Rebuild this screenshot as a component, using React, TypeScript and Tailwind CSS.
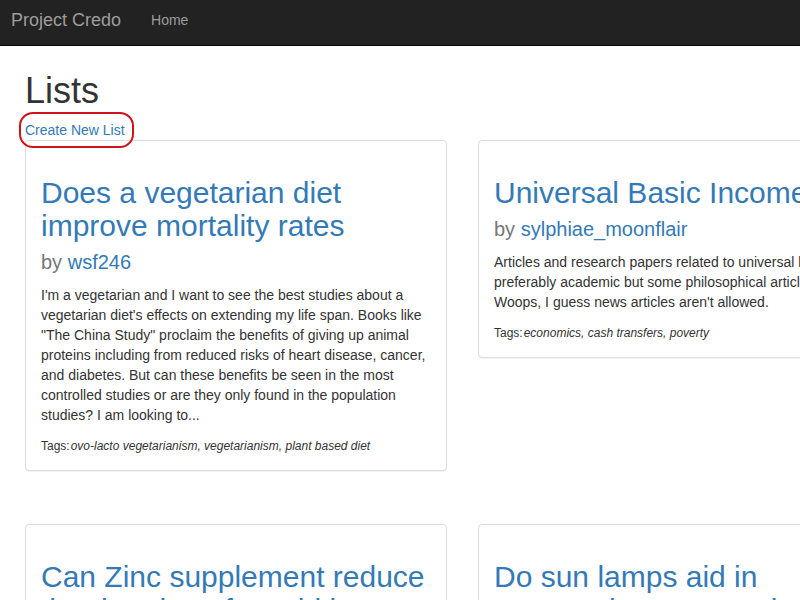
type List = {
  title: string;
  author: string;
  body: string;
  tags: string;
};

const lists: List[] = [
  {
    title: "Does a vegetarian diet improve mortality rates",
    author: "wsf246",
    body: "I'm a vegetarian and I want to see the best studies about a vegetarian diet's effects on extending my life span. Books like \"The China Study\" proclaim the benefits of giving up animal proteins including from reduced risks of heart disease, cancer, and diabetes. But can these benefits be seen in the most controlled studies or are they only found in the population studies? I am looking to...",
    tags: "ovo-lacto vegetarianism, vegetarianism, plant based diet",
  },
  {
    title: "Universal Basic Income",
    author: "sylphiae_moonflair",
    body: "Articles and research papers related to universal basic income, preferably academic but some philosophical articles as well. Woops, I guess news articles aren't allowed.",
    tags: "economics, cash transfers, poverty",
  },
  {
    title: "Can Zinc supplement reduce the duration of a cold in adults",
    author: "wsf246",
    body: "Looking for controlled trials on zinc lozenges and the common cold.",
    tags: "zinc, common cold",
  },
  {
    title: "Do sun lamps aid in overcoming seasonal affective disorder",
    author: "sylphiae_moonflair",
    body: "Light therapy studies for seasonal depression.",
    tags: "light therapy, depression",
  },
];

const ListCard = ({ list }: { list: List }) => (
  <div className="w-[422px] self-start rounded border border-[#ddd] bg-white px-[15px] pt-[35px] pb-[15px] shadow-[0_1px_1px_rgba(0,0,0,0.05)]">
    <h2 className="text-[30px] leading-[33px] text-[#337ab7]">{list.title}</h2>
    <h3 className="mt-[9px] text-[20px] leading-[22px] text-[#777]">
      by <span className="text-[#337ab7]">{list.author}</span>
    </h3>
    <p className="mt-3 text-[14px] leading-[20px] text-[#333]">{list.body}</p>
    <p className="mt-[13px] text-[12px] leading-[17px] text-[#333]">
      Tags:<em className="ml-[1px]">{list.tags}</em>
    </p>
  </div>
);

export default function App() {
  return (
    <div className="h-[600px] w-[800px] overflow-hidden bg-white font-['Liberation_Sans',Arial,sans-serif]">
      <nav className="flex h-[46px] items-start border-b border-[#080808] bg-[#222] pt-[10px]">
        <span className="ml-[11px] text-[18px] leading-[20px] text-[#9d9d9d]">Project Credo</span>
        <span className="ml-[30px] text-[14px] leading-[20px] text-[#9d9d9d]">Home</span>
      </nav>

      <div className="px-[25px]">
        <h1 className="mt-[25px] text-[36px] leading-[40px] text-[#333]">Lists</h1>
        <div className="relative mt-[7px] h-[20px] w-fit">
          <a className="text-[14px] leading-[20px] text-[#337ab7]">Create New List</a>
          <span className="absolute -top-[6px] -left-[6px] h-[36px] w-[115px] rounded-[14px] border-2 border-[#d0121b]" />
        </div>

        <div className="mt-[2px] grid w-[875px] grid-cols-[422px_422px] gap-x-[31px] gap-y-[53px]">
          {lists.map((l) => (
            <ListCard key={l.title} list={l} />
          ))}
        </div>
      </div>
    </div>
  );
}
